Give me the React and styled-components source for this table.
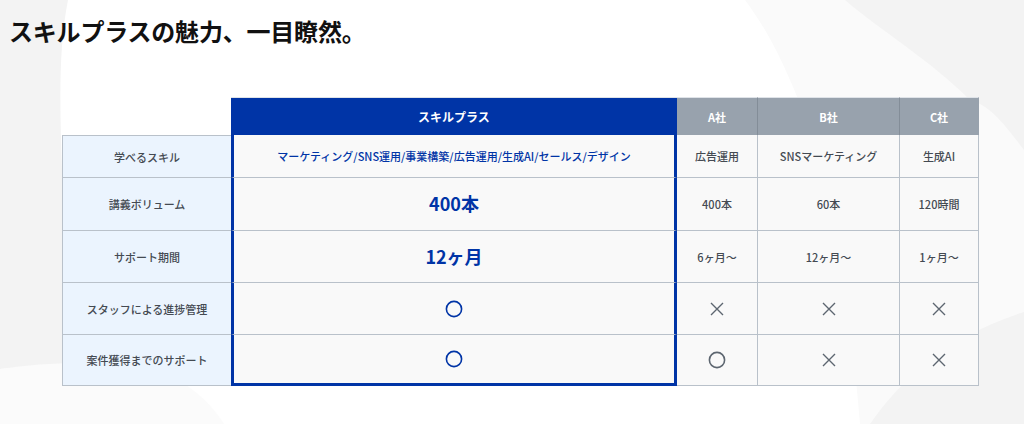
import React from "react";
import styled, { createGlobalStyle } from "styled-components";

const GlobalStyle = createGlobalStyle`
  html, body {
    margin: 0;
    padding: 0;
    background: #ffffff;
  }
  body {
    font-family: "Noto Sans CJK JP", "Noto Sans", sans-serif;
    color: #333;
  }
`;

const SKILL_BLUE = "#0034a6";
const LINE = "#b9c1ca";

const rows = [
  {
    label: "学べるスキル",
    main: "マーケティング/SNS運用/事業構築/広告運用/生成AI/セールス/デザイン",
    others: ["広告運用", "SNSマーケティング", "生成AI"],
  },
  { label: "講義ボリューム", main: "400本", big: true, others: ["400本", "60本", "120時間"] },
  { label: "サポート期間", main: "12ヶ月", big: true, others: ["6ヶ月〜", "12ヶ月〜", "1ヶ月〜"] },
  { label: "スタッフによる進捗管理", main: "o", others: ["x", "x", "x"] },
  { label: "案件獲得までのサポート", main: "o", others: ["o", "x", "x"] },
];

const Circle = ({ color }) => (
  <svg width="18" height="18" viewBox="0 0 18 18">
    <circle cx="9" cy="9" r="7.6" fill="none" stroke={color} strokeWidth="1.6" />
  </svg>
);

const Cross = () => (
  <svg width="16" height="16" viewBox="0 0 16 16">
    <path d="M2 2 L14 14 M14 2 L2 14" stroke="#5d6670" strokeWidth="1.4" fill="none" />
  </svg>
);

const renderMark = (value, color) => {
  if (value === "o") return <Circle color={color} />;
  if (value === "x") return <Cross />;
  return value;
};

const App = () => {
  return (
    <Page>
      <GlobalStyle />
      <Backdrop viewBox="0 0 1024 424" preserveAspectRatio="none">
        <path d="M0 0 H68 C58 50 60 110 62 170 L62 366 C40 366 20 367 0 369 Z" fill="#f3f3f3" />
        <path d="M745 0 H1024 V424 H860 C850 300 830 170 790 80 C775 45 760 20 745 0 Z" fill="#fafafa" />
        <path d="M845 0 H1024 V150 C1005 125 990 105 970 100 C930 60 880 30 845 0 Z" fill="#f3f3f3" />
        <path d="M870 424 C900 380 950 335 1024 312 V424 Z" fill="#f3f3f3" />
        <path d="M0 369 C60 360 130 360 170 376 C195 388 212 405 224 424 H0 Z" fill="#fbfbfb" />
      </Backdrop>
      <Title>スキルプラスの魅力、一目瞭然。</Title>
      <Table>
        <Corner />
        <MainHead>スキルプラス</MainHead>
        <RivalHead>A社</RivalHead>
        <RivalHead>B社</RivalHead>
        <RivalHead $last>C社</RivalHead>
        {rows.map((row, i) => (
          <React.Fragment key={row.label}>
            <LabelCell $first={i === 0}>{row.label}</LabelCell>
            <MainCell $big={row.big} $lastRow={i === rows.length - 1}>
              {renderMark(row.main, SKILL_BLUE)}
            </MainCell>
            {row.others.map((v, j) => (
              <RivalCell key={j} $first={i === 0}>
                {renderMark(v, "#5d6670")}
              </RivalCell>
            ))}
          </React.Fragment>
        ))}
      </Table>
    </Page>
  );
};

export default App;

const Page = styled.div`
  position: relative;
  width: 1024px;
  height: 424px;
  overflow: hidden;
  padding: 13px 0 0 0;
  box-sizing: border-box;
`;

const Backdrop = styled.svg`
  position: absolute;
  inset: 0;
  width: 100%;
  height: 100%;
  z-index: 0;
`;

const Title = styled.h1`
  position: relative;
  z-index: 1;
  margin: 0 0 0 9px;
  font-size: 24px;
  line-height: 36px;
  font-weight: 700;
  color: #111;
  letter-spacing: -0.2px;
`;

const Table = styled.div`
  position: relative;
  z-index: 1;
  margin: 48px 0 0 62px;
  display: grid;
  grid-template-columns: 169px 446px 81px 142px 79px;
  grid-template-rows: 38px 43px 53px 52px 52px 51px;
  width: 917px;
`;

const CellBase = styled.div`
  box-sizing: border-box;
  display: flex;
  align-items: center;
  justify-content: center;
  text-align: center;
`;

const Corner = styled.div``;

const MainHead = styled(CellBase)`
  background: ${SKILL_BLUE};
  color: #fff;
  font-size: 12px;
  font-weight: 700;
  border-top: 1px solid #dfe3e8;
`;

const RivalHead = styled(CellBase)`
  background: #98a2ad;
  color: #fff;
  font-size: 11px;
  font-weight: 700;
  border-top: 1px solid #dfe3e8;
  border-right: 1px solid ${(p) => (p.$last ? "#98a2ad" : "#838d98")};
`;

const LabelCell = styled(CellBase)`
  background: #ebf4fe;
  color: #444a52;
  font-size: 11px;
  font-weight: 500;
  border-left: 1px solid ${LINE};
  border-bottom: 1px solid ${LINE};
  border-top: ${(p) => (p.$first ? `1px solid ${LINE}` : "none")};
`;

const MainCell = styled(CellBase)`
  background: #f9f9f9;
  color: ${SKILL_BLUE};
  font-size: ${(p) => (p.$big ? "18px" : "11px")};
  font-weight: ${(p) => (p.$big ? 700 : 500)};
  border-left: 3px solid ${SKILL_BLUE};
  border-right: 3px solid ${SKILL_BLUE};
  border-bottom: ${(p) => (p.$lastRow ? `3px solid ${SKILL_BLUE}` : `1px solid ${LINE}`)};
  padding-bottom: ${(p) => (p.$big ? "2px" : "0")};
`;

const RivalCell = styled(CellBase)`
  background: #f9f9f9;
  color: #444a52;
  font-size: 11px;
  font-weight: 500;
  border-right: 1px solid ${LINE};
  border-bottom: 1px solid ${LINE};
`;
